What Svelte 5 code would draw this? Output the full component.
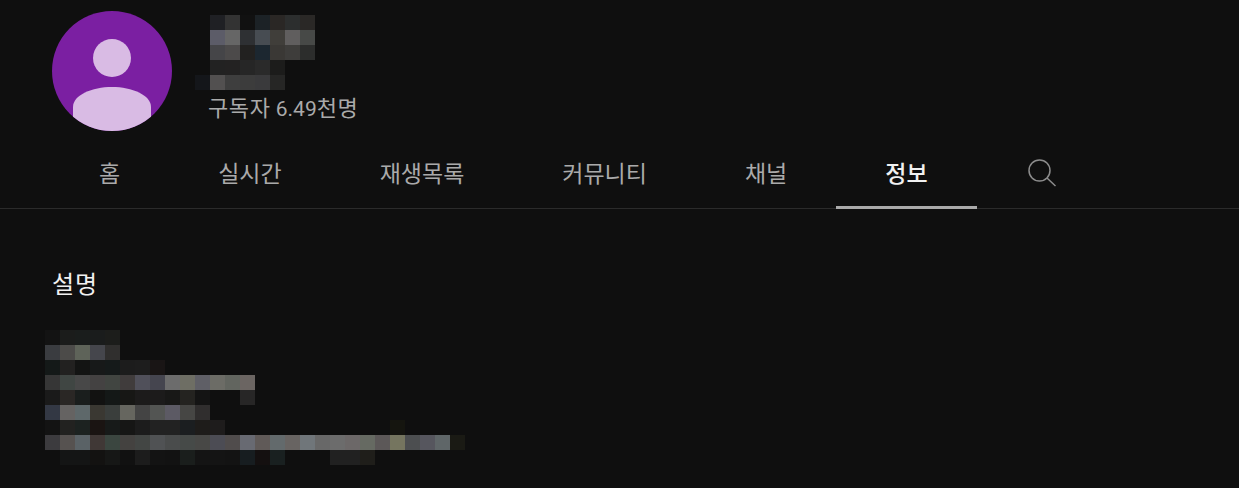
<script>
    const tabs = ["홈", "실시간", "재생목록", "커뮤니티", "채널", "정보"]
    const active = "정보"

    // blurred-out channel name, one string per row of 15px blocks
    const nameBlocks = [
        "0 1f2024 333333 111111 1c2226 2a2725 2c2e2e 2a2826",
        "0 5c5c68 666666 2e3033 474c52 403e3a 605e5e 474947",
        "0 454548 4c4a4a 222120 1c2730 3a3835 3e3d3b 2c2d2c",
        "0 222222 232222 262626 2a2a2a 1c1c1b",
        "14161a 525050 3e3e3e 3c3c3c 3a3a3c 262625"
    ]

    // blurred-out description
    const descBlocks = [
        "131313 1b1c1b 1a1d1c 1a1c1c 1c1d1b",
        "3a3c40 4c4b49 5e6359 45464c 302f2e",
        "141918 222120 131413 171919 151a1a 1c1c1c 1d1d1d 191515",
        "363636 404643 484848 444242 414541 403c3c 50505a 45454f 6c6c6c 6e6e64 5f5f66 6c6c66 62655f 6b6562",
        "1a1a1a 2a2725 1a1e1d 121211 141817 171715 1c1b1b 1c1b1b 181817 242320 141414 0 0 272626",
        "333844 656362 5e686a 3a3832 3a3e3c 66665f 444444 535553 5c5a64 464644 302e2e",
        "131313 222220 1c2220 1a1412 171a19 161615 1c1c1c 222222 222222 1b1e20 1e1c1a 1e1c1c 0 0 0 0 0 0 0 0 0 0 0 15150f",
        "3c3b3e 565250 5a6266 403836 3b4640 444240 434644 505254 4a4c4c 464a48 484846 4c4c54 504c4c 686a72 605a58 636a6c 686462 70767a 686868 6c6c6c 6c6868 666a62 5c5858 75755f 4c4e50 56565e 5f6668 1a1a14",
        "0 141515 141515 131211 161716 111111 1c1c1c 131313 121212 1a1e1c 141414 141414 131313 171d20 141010 192020 0 0 0 212121 212121 1f1e1a"
    ]

    const toRow = (s) => s.split(" ").map((c) => (c === "0" ? "transparent" : "#" + c))
</script>

<main>
    <header class="top">
        <div class="avatar">
            <svg viewBox="0 0 120 120" width="120" height="120">
                <defs>
                    <clipPath id="round"><circle cx="60" cy="60" r="60" /></clipPath>
                </defs>
                <circle cx="60" cy="60" r="60" fill="#7b1fa2" />
                <circle cx="60" cy="47" r="19" fill="#d9bbe4" />
                <path d="M21 96 C21 84 40 76 60 76 C80 76 99 84 99 96 V120 H21 Z" fill="#d9bbe4" clip-path="url(#round)" />
            </svg>
        </div>
        <div class="info">
            <div class="mosaic">
                {#each nameBlocks as row}
                    <div class="row">
                        {#each toRow(row) as c}<span style="background:{c}"></span>{/each}
                    </div>
                {/each}
            </div>
            <p class="subs"><span class="ko">구독자</span> 6.49<span class="ko">천명</span></p>
        </div>
    </header>

    <nav class="tabs">
        {#each tabs as t}
            <div class="tab" class:active={t === active}>{t}</div>
        {/each}
        <div class="search">
            <svg viewBox="0 0 28 28" width="28" height="28" fill="none" stroke="#8c8c8c" stroke-width="1.5">
                <circle cx="11.5" cy="11.5" r="10.5" />
                <path d="M19 19 L27.5 27" />
            </svg>
        </div>
    </nav>

    <section class="about">
        <h2>설명</h2>
        <div class="mosaic desc">
            {#each descBlocks as row}
                <div class="row">
                    {#each toRow(row) as c}<span style="background:{c}"></span>{/each}
                </div>
            {/each}
        </div>
    </section>
</main>

<style>
    :global(body) {
        background: #0f0f0f;
        margin: 0;
    }

    main {
        height: 488px;
        overflow: hidden;
        background: #0f0f0f;
        font-family: "Noto Sans CJK KR", "Noto Sans", sans-serif;
    }

    .top {
        display: flex;
        height: 140px;
        padding: 11px 0 0 52px;
        box-sizing: border-box;
    }

    .avatar {
        width: 120px;
        height: 120px;
    }

    .avatar svg {
        display: block;
    }

    .info {
        margin-left: 23px;
        padding-top: 4px;
    }

    .mosaic {
        display: flex;
        flex-direction: column;
    }

    .row {
        display: flex;
        height: 15px;
    }

    .row span {
        width: 15px;
        height: 15px;
    }

    .subs {
        margin: 1px 0 0 13px;
        font-size: 21px;
        line-height: 30px;
        color: #aaaaaa;
        white-space: nowrap;
        font-family: Roboto, "Noto Sans CJK KR", sans-serif;
    }

    .ko {
        font-family: "Noto Sans CJK KR", sans-serif;
        font-size: 22px;
        letter-spacing: 0.6px;
    }

    .tabs {
        display: flex;
        height: 68px;
        padding-left: 50px;
        border-bottom: 1px solid #2b2b2b;
    }

    .tab {
        padding: 0 49px;
        font-size: 23px;
        line-height: 64px;
        color: #aaaaaa;
        white-space: nowrap;
        box-sizing: border-box;
        height: 69px;
    }

    .tab.active {
        color: #f1f1f1;
        font-weight: 500;
        border-bottom: 3px solid #aaaaaa;
    }

    .search {
        margin-left: 51px;
        padding-top: 19px;
    }

    .about {
        padding-top: 56px;
    }

    h2 {
        margin: 0 0 29px 52px;
        font-size: 24px;
        letter-spacing: 1px;
        line-height: 36px;
        font-weight: 400;
        color: #f1f1f1;
    }

    .desc {
        margin-left: 45px;
    }
</style>
